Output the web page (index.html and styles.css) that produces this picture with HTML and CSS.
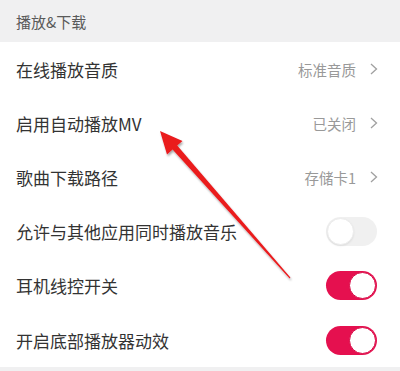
FILE: index.html
```html
<!DOCTYPE html>
<html lang="zh">
<head>
<meta charset="utf-8">
<link rel="stylesheet" href="styles.css">
</head>
<body>
<div class="page">
  <div class="section-head">播放&amp;下载</div>
  <div class="list">
    <div class="row">
      <span class="label">在线播放音质</span>
      <span class="value">标准音质<svg class="chev" width="8" height="12" viewBox="0 0 8 12"><path d="M1 1 L6.5 6 L1 11" fill="none" stroke="#a0a0a0" stroke-width="1.3"/></svg></span>
    </div>
    <div class="row">
      <span class="label">启用自动播放MV</span>
      <span class="value">已关闭<svg class="chev" width="8" height="12" viewBox="0 0 8 12"><path d="M1 1 L6.5 6 L1 11" fill="none" stroke="#a0a0a0" stroke-width="1.3"/></svg></span>
    </div>
    <div class="row">
      <span class="label">歌曲下载路径</span>
      <span class="value">存储卡1<svg class="chev" width="8" height="12" viewBox="0 0 8 12"><path d="M1 1 L6.5 6 L1 11" fill="none" stroke="#a0a0a0" stroke-width="1.3"/></svg></span>
    </div>
    <div class="row">
      <span class="label">允许与其他应用同时播放音乐</span>
      <span class="toggle"><span class="knob"></span></span>
    </div>
    <div class="row">
      <span class="label">耳机线控开关</span>
      <span class="toggle on"><span class="knob"></span></span>
    </div>
    <div class="row">
      <span class="label">开启底部播放器动效</span>
      <span class="toggle on"><span class="knob"></span></span>
    </div>
  </div>
  <div class="foot"></div>
  <svg class="arrow" width="400" height="371" viewBox="0 0 400 371">
    <defs>
      <filter id="sh" x="-20%" y="-20%" width="140%" height="140%">
        <feGaussianBlur in="SourceAlpha" stdDeviation="1.2"/>
        <feOffset dx="1" dy="1.5" result="b"/>
        <feComponentTransfer><feFuncA type="linear" slope="0.35"/></feComponentTransfer>
        <feMerge><feMergeNode/><feMergeNode in="SourceGraphic"/></feMerge>
      </filter>
    </defs>
    <polygon filter="url(#sh)" fill="#ea1a1d" points="160,131 182.5,141 177.2,145.6 290.4,277.6 289.6,278.4 172.6,149.6 167,154.5"/>
  </svg>
</div>
</body>
</html>
```
FILE: styles.css
```css
html, body {
  margin: 0;
  padding: 0;
  background: #ffffff;
}
body {
  font-family: "Noto Sans CJK SC", "Noto Sans", sans-serif;
}
.page {
  position: relative;
  width: 400px;
  height: 371px;
  overflow: hidden;
  background: #ffffff;
}
.section-head {
  height: 42px;
  box-sizing: border-box;
  padding-left: 16px;
  display: flex;
  align-items: center;
  background: #f0f0f1;
  color: #5a5a5a;
  font-size: 15px;
}
.list {
  display: flex;
  flex-direction: column;
}
.row {
  height: 54.2px;
  box-sizing: border-box;
  padding: 0 23px 0 16px;
  display: flex;
  align-items: center;
  justify-content: space-between;
}
.label {
  font-size: 17px;
  color: #333333;
}
.value {
  display: flex;
  align-items: center;
  gap: 14px;
  font-size: 14.5px;
  color: #999999;
}
.chev {
  margin-right: -1px;
}
.toggle {
  position: relative;
  width: 51px;
  height: 29px;
  box-sizing: border-box;
  border-radius: 15px;
  background: #f0f0f0;
  display: flex;
  align-items: center;
  justify-content: flex-start;
  padding: 1px;
}
.toggle .knob {
  width: 27px;
  height: 27px;
  border-radius: 50%;
  background: #ffffff;
  box-sizing: border-box;
  border: 1px solid #ececec;
  box-shadow: 0 1px 2px rgba(0,0,0,0.08);
}
.toggle.on {
  background: #e5104f;
  justify-content: flex-end;
}
.toggle.on .knob {
  border: 1.5px solid #d80c47;
  box-shadow: none;
}
.foot {
  height: 10px;
  background: #f0f0f1;
}
.arrow {
  position: absolute;
  left: 0;
  top: 0;
  pointer-events: none;
}
```
